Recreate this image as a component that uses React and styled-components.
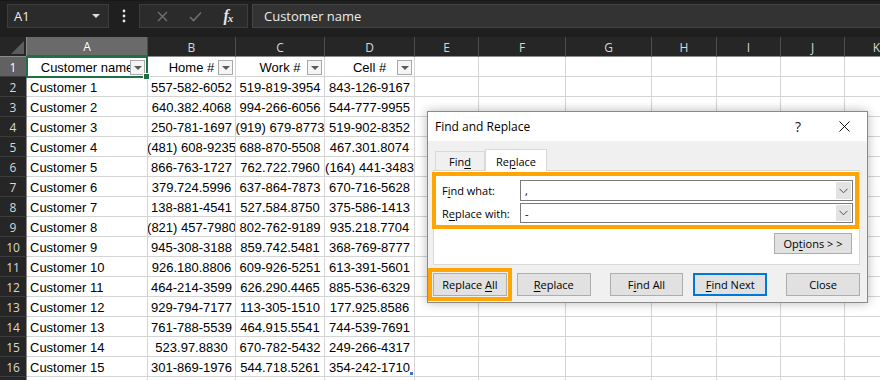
import React from "react";
import styled, { createGlobalStyle, css } from "styled-components";

const GlobalStyle = createGlobalStyle`
  html, body {
    margin: 0;
    padding: 0;
    background: #1f1f1f;
  }
  body {
    font-family: "Liberation Sans", Arial, sans-serif;
  }
`;

const colWidths = [27, 121, 88, 89, 90, 64, 87, 86, 65, 64, 64, 64];
const letters = ["A", "B", "C", "D", "E", "F", "G", "H", "I", "J", "K"];
const headers = ["Customer name", "Home #", "Work #", "Cell #"];

const rows = [
  ["Customer 1", "557-582-6052", "519-819-3954", "843-126-9167"],
  ["Customer 2", "640.382.4068", "994-266-6056", "544-777-9955"],
  ["Customer 3", "250-781-1697", "(919) 679-8773", "519-902-8352"],
  ["Customer 4", "(481) 608-9235", "688-870-5508", "467.301.8074"],
  ["Customer 5", "866-763-1727", "762.722.7960", "(164) 441-3483"],
  ["Customer 6", "379.724.5996", "637-864-7873", "670-716-5628"],
  ["Customer 7", "138-881-4541", "527.584.8750", "375-586-1413"],
  ["Customer 8", "(821) 457-7980", "802-762-9189", "935.218.7704"],
  ["Customer 9", "945-308-3188", "859.742.5481", "368-769-8777"],
  ["Customer 10", "926.180.8806", "609-926-5251", "613-391-5601"],
  ["Customer 11", "464-214-3599", "626.290.4465", "885-536-6329"],
  ["Customer 12", "929-794-7177", "113-305-1510", "177.925.8586"],
  ["Customer 13", "761-788-5539", "464.915.5541", "744-539-7691"],
  ["Customer 14", "523.97.8830", "670-782-5432", "249-266-4317"],
  ["Customer 15", "301-869-1976", "544.718.5261", "354-242-1710"],
];

const Screen = styled.div`
  position: relative;
  width: 880px;
  height: 380px;
  overflow: hidden;
  background: #1f1f1f;
`;

/* ---------- formula bar ---------- */

const Bar = styled.div`
  height: 37px;
  box-sizing: border-box;
  padding: 3px 0 0 7px;
  display: flex;
  align-items: flex-start;
  border-top: 1px solid #181818;
  font-family: "Open Sans", sans-serif;
  color: #ececec;
`;

const NameBox = styled.div`
  width: 102px;
  height: 24px;
  box-sizing: border-box;
  background: #2b2b2b;
  border: 1px solid #3d3d3d;
  display: flex;
  align-items: center;
  justify-content: space-between;
  padding: 0 8px 0 6px;
  font-size: 13px;
`;

const Caret = styled.span`
  width: 0;
  height: 0;
  border-left: 4px solid transparent;
  border-right: 4px solid transparent;
  border-top: 4px solid #e0e0e0;
`;

const Dots = styled.div`
  width: 30px;
  height: 24px;
  display: flex;
  align-items: center;
  justify-content: center;
`;

const Tools = styled.div`
  width: 109px;
  height: 24px;
  box-sizing: border-box;
  background: #2b2b2b;
  border: 1px solid #3d3d3d;
  display: flex;
  align-items: center;
  justify-content: space-around;
  padding: 0 4px 0 6px;
`;

const Fx = styled.span`
  font-family: "Liberation Serif", serif;
  font-style: italic;
  font-weight: bold;
  font-size: 16px;
  color: #e6e6e6;
  letter-spacing: -1px;
  sub {
    font-size: 11px;
    vertical-align: -1px;
  }
`;

const FormulaInput = styled.div`
  flex: 1;
  height: 24px;
  box-sizing: border-box;
  margin-left: 4px;
  background: #333333;
  border: 1px solid #444444;
  border-right: none;
  display: flex;
  align-items: center;
  padding-left: 11px;
  font-size: 13px;
`;

/* ---------- sheet ---------- */

const Sheet = styled.div`
  display: grid;
  grid-template-columns: ${colWidths.map((w) => w + "px").join(" ")};
  grid-auto-rows: 20px;
`;

const Corner = styled.div`
  position: relative;
  background: #262626;
  border-bottom: 1px solid #8c8c8c;
  border-right: 1px solid #8c8c8c;
  &::after {
    content: "";
    position: absolute;
    right: 2px;
    bottom: 2px;
    width: 0;
    height: 0;
    border-left: 13px solid transparent;
    border-bottom: 13px solid #5c5c5c;
  }
`;

const ColHead = styled.div`
  box-sizing: border-box;
  background: #262626;
  color: #d8d8d8;
  border-right: 1px solid #4d4d4d;
  border-bottom: 1px solid #8c8c8c;
  display: flex;
  align-items: center;
  justify-content: center;
  font-family: "Open Sans", sans-serif;
  font-size: 12px;
  padding-top: 1px;
  ${(p) =>
    p.$selected &&
    css`
      background: #6a6a6a;
      color: #ffffff;
      border-bottom: 2px solid #1e7145;
    `}
`;

const RowHead = styled.div`
  box-sizing: border-box;
  background: #262626;
  color: #d8d8d8;
  border-right: 1px solid #8c8c8c;
  border-bottom: 1px solid #3c3c3c;
  display: flex;
  align-items: center;
  justify-content: center;
  font-family: "Open Sans", sans-serif;
  font-size: 12px;
  padding-top: 1px;
  ${(p) =>
    p.$selected &&
    css`
      background: #616161;
      color: #ffffff;
    `}
`;

const Cell = styled.div`
  position: relative;
  box-sizing: border-box;
  background: #ffffff;
  color: #000000;
  border-right: 1px solid #d4d4d4;
  border-bottom: 1px solid #d4d4d4;
  display: flex;
  align-items: center;
  justify-content: ${(p) => (p.$align === "left" ? "flex-start" : "center")};
  padding: 2px ${(p) => (p.$align === "left" ? "3px" : "0")} 0;
  font-size: 13px;
  white-space: nowrap;
  overflow: ${(p) => (p.$active ? "visible" : "hidden")};
  ${(p) =>
    p.$active &&
    css`
      z-index: 2;
      &::before {
        content: "";
        position: absolute;
        left: -1px;
        top: -1px;
        right: -1px;
        bottom: -2px;
        border: 2px solid #1e7145;
        pointer-events: none;
      }
      &::after {
        content: "";
        position: absolute;
        right: -3px;
        bottom: -4px;
        width: 5px;
        height: 5px;
        background: #1e7145;
        border: 1px solid #ffffff;
      }
    `}
  ${(p) =>
    p.$tableEnd &&
    css`
      &::after {
        content: "";
        position: absolute;
        right: 1px;
        bottom: 1px;
        width: 3px;
        height: 3px;
        background: #4472c4;
      }
    `}
`;

const HeadLabel = styled.span`
  display: block;
  width: 100%;
  overflow: hidden;
  text-align: center;
  white-space: nowrap;
  text-overflow: clip;
`;

const FilterButton = styled.span`
  position: absolute;
  right: 2px;
  top: 3px;
  width: 15px;
  height: 15px;
  box-sizing: border-box;
  border: 1px solid #a9a9a9;
  background: #f4f4f4;
  display: flex;
  align-items: center;
  justify-content: center;
  &::after {
    content: "";
    border-left: 4px solid transparent;
    border-right: 4px solid transparent;
    border-top: 4px solid #5a5a5a;
    margin-top: 1px;
  }
`;

/* ---------- dialog ---------- */

const Dialog = styled.div`
  position: absolute;
  left: 427px;
  top: 111px;
  width: 441px;
  height: 192px;
  box-sizing: border-box;
  border: 1px solid #8a8a8a;
  background: #f0f0f0;
  box-shadow: 0 0 10px rgba(0, 0, 0, 0.28);
  font-family: "Open Sans", sans-serif;
  font-size: 11px;
  color: #000000;
  display: flex;
  flex-direction: column;
  z-index: 5;
  u {
    text-decoration-thickness: 1px;
    text-underline-offset: 2px;
  }
`;

const TitleBar = styled.div`
  height: 29px;
  background: #ffffff;
  display: flex;
  align-items: center;
  padding: 0 17px 0 7px;
`;

const Title = styled.div`
  flex: 1;
  font-size: 12px;
`;

const Help = styled.div`
  font-size: 14px;
  margin-right: 38px;
  color: #111;
`;

const Body = styled.div`
  flex: 1;
  padding: 8px 7px 0 5px;
  display: flex;
  flex-direction: column;
`;

const Tabs = styled.div`
  display: flex;
  align-items: flex-end;
  margin-left: 2px;
  height: 21px;
`;

const Tab = styled.div`
  box-sizing: border-box;
  width: ${(p) => (p.$active ? 62 : 50)}px;
  height: ${(p) => (p.$active ? 22 : 19)}px;
  border: 1px solid #d9d9d9;
  border-bottom: none;
  background: ${(p) => (p.$active ? "#ffffff" : "#f0f0f0")};
  display: flex;
  align-items: center;
  justify-content: center;
  margin-bottom: ${(p) => (p.$active ? "-1px" : "0")};
  position: relative;
  z-index: ${(p) => (p.$active ? 1 : 0)};
  padding-top: 1px;
`;

const Panel = styled.div`
  height: 95px;
  box-sizing: border-box;
  background: #ffffff;
  border: 1px solid #d9d9d9;
  display: flex;
  flex-direction: column;
`;

const Highlight = styled.div`
  margin: 1px 0 0 -2px;
  border: 4px solid #ffa500;
  display: grid;
  grid-template-columns: 78px 1fr;
  grid-template-rows: 21px 20px;
  row-gap: 2px;
  align-items: center;
  padding: 4px 2px 2px 6px;
`;

const Combo = styled.div`
  height: 100%;
  box-sizing: border-box;
  border: 1px solid #7a7a7a;
  display: flex;
  align-items: center;
  padding-left: 4px;
`;

const ComboText = styled.span`
  flex: 1;
`;

const ComboArrow = styled.span`
  width: 17px;
  height: 100%;
  box-sizing: border-box;
  border: 1px solid #ffffff;
  background: #e3e3e3;
  display: flex;
  align-items: center;
  justify-content: center;
`;

const OptionsRow = styled.div`
  display: flex;
  justify-content: flex-end;
  padding: 4px 7px 0 0;
`;

const Button = styled.div`
  box-sizing: border-box;
  width: ${(p) => p.$w || 74}px;
  height: ${(p) => p.$h || 23}px;
  margin-left: ${(p) => p.$gap || 0}px;
  background: #e1e1e1;
  border: ${(p) => (p.$default ? "2px solid #0078d7" : "1px solid #adadad")};
  display: flex;
  align-items: center;
  justify-content: center;
  white-space: nowrap;
  ${(p) =>
    p.$hot &&
    css`
      outline: 4px solid #ffa500;
      outline-offset: 1px;
    `}
`;

const Actions = styled.div`
  display: flex;
  margin-top: 8px;
`;

const Chevron = () => (
  <svg width="9" height="6" viewBox="0 0 9 6">
    <path d="M0.5 0.8 L4.5 4.8 L8.5 0.8" fill="none" stroke="#505050" strokeWidth="1" />
  </svg>
);

function FormulaBar() {
  return (
    <Bar>
      <NameBox>
        A1
        <Caret />
      </NameBox>
      <Dots>
        <svg width="4" height="14" viewBox="0 0 4 14">
          <circle cx="2" cy="2" r="1.4" fill="#e6e6e6" />
          <circle cx="2" cy="7" r="1.4" fill="#e6e6e6" />
          <circle cx="2" cy="12" r="1.4" fill="#e6e6e6" />
        </svg>
      </Dots>
      <Tools>
        <svg width="11" height="11" viewBox="0 0 11 11">
          <path d="M1 1 L10 10 M10 1 L1 10" stroke="#707070" strokeWidth="1.4" />
        </svg>
        <svg width="13" height="11" viewBox="0 0 13 11">
          <path d="M1 6 L4.5 9.5 L12 1.5" fill="none" stroke="#707070" strokeWidth="1.6" />
        </svg>
        <Fx>
          f<sub>x</sub>
        </Fx>
      </Tools>
      <FormulaInput>Customer name</FormulaInput>
    </Bar>
  );
}

function Grid() {
  return (
    <Sheet>
      <Corner />
      {letters.map((l, i) => (
        <ColHead key={l} $selected={i === 0}>
          {l}
        </ColHead>
      ))}

      <RowHead $selected>1</RowHead>
      {letters.map((l, i) =>
        i < 4 ? (
          <Cell key={l} $active={i === 0}>
            <HeadLabel>{headers[i]}</HeadLabel>
            <FilterButton />
          </Cell>
        ) : (
          <Cell key={l} />
        )
      )}

      {rows.map((r, ri) => (
        <React.Fragment key={ri}>
          <RowHead>{ri + 2}</RowHead>
          {letters.map((l, i) =>
            i < 4 ? (
              <Cell
                key={l}
                $align={i === 0 ? "left" : "center"}
                $tableEnd={ri === rows.length - 1 && i === 3}
              >
                {r[i]}
              </Cell>
            ) : (
              <Cell key={l} />
            )
          )}
        </React.Fragment>
      ))}

      {/* row 17 is only a sliver at the bottom edge */}
      <RowHead />
      {letters.map((l) => (
        <Cell key={l} />
      ))}
    </Sheet>
  );
}

function FindReplaceDialog() {
  return (
    <Dialog>
      <TitleBar>
        <Title>Find and Replace</Title>
        <Help>?</Help>
        <svg width="11" height="11" viewBox="0 0 11 11">
          <path d="M0.5 0.5 L10.5 10.5 M10.5 0.5 L0.5 10.5" stroke="#111" strokeWidth="1" />
        </svg>
      </TitleBar>
      <Body>
        <Tabs>
          <Tab>
            <span>
              Fin<u>d</u>
            </span>
          </Tab>
          <Tab $active>
            <span>
              Re<u>p</u>lace
            </span>
          </Tab>
        </Tabs>
        <Panel>
          <Highlight>
            <span>
              F<u>i</u>nd what:
            </span>
            <Combo>
              <ComboText>,</ComboText>
              <ComboArrow>
                <Chevron />
              </ComboArrow>
            </Combo>
            <span>
              R<u>e</u>place with:
            </span>
            <Combo>
              <ComboText>-</ComboText>
              <ComboArrow>
                <Chevron />
              </ComboArrow>
            </Combo>
          </Highlight>
          <OptionsRow>
            <Button $w={78} $h={21}>
              <span>
                Op<u>t</u>ions &gt; &gt;
              </span>
            </Button>
          </OptionsRow>
        </Panel>
        <Actions>
          <Button $hot>
            <span>
              Replace <u>A</u>ll
            </span>
          </Button>
          <Button $gap={10}>
            <span>
              <u>R</u>eplace
            </span>
          </Button>
          <Button $gap={19}>
            <span>
              F<u>i</u>nd All
            </span>
          </Button>
          <Button $gap={10} $default>
            <span>
              <u>F</u>ind Next
            </span>
          </Button>
          <Button $gap={19}>
            <span>Close</span>
          </Button>
        </Actions>
      </Body>
    </Dialog>
  );
}

export default function App() {
  return (
    <Screen>
      <GlobalStyle />
      <FormulaBar />
      <Grid />
      <FindReplaceDialog />
    </Screen>
  );
}
